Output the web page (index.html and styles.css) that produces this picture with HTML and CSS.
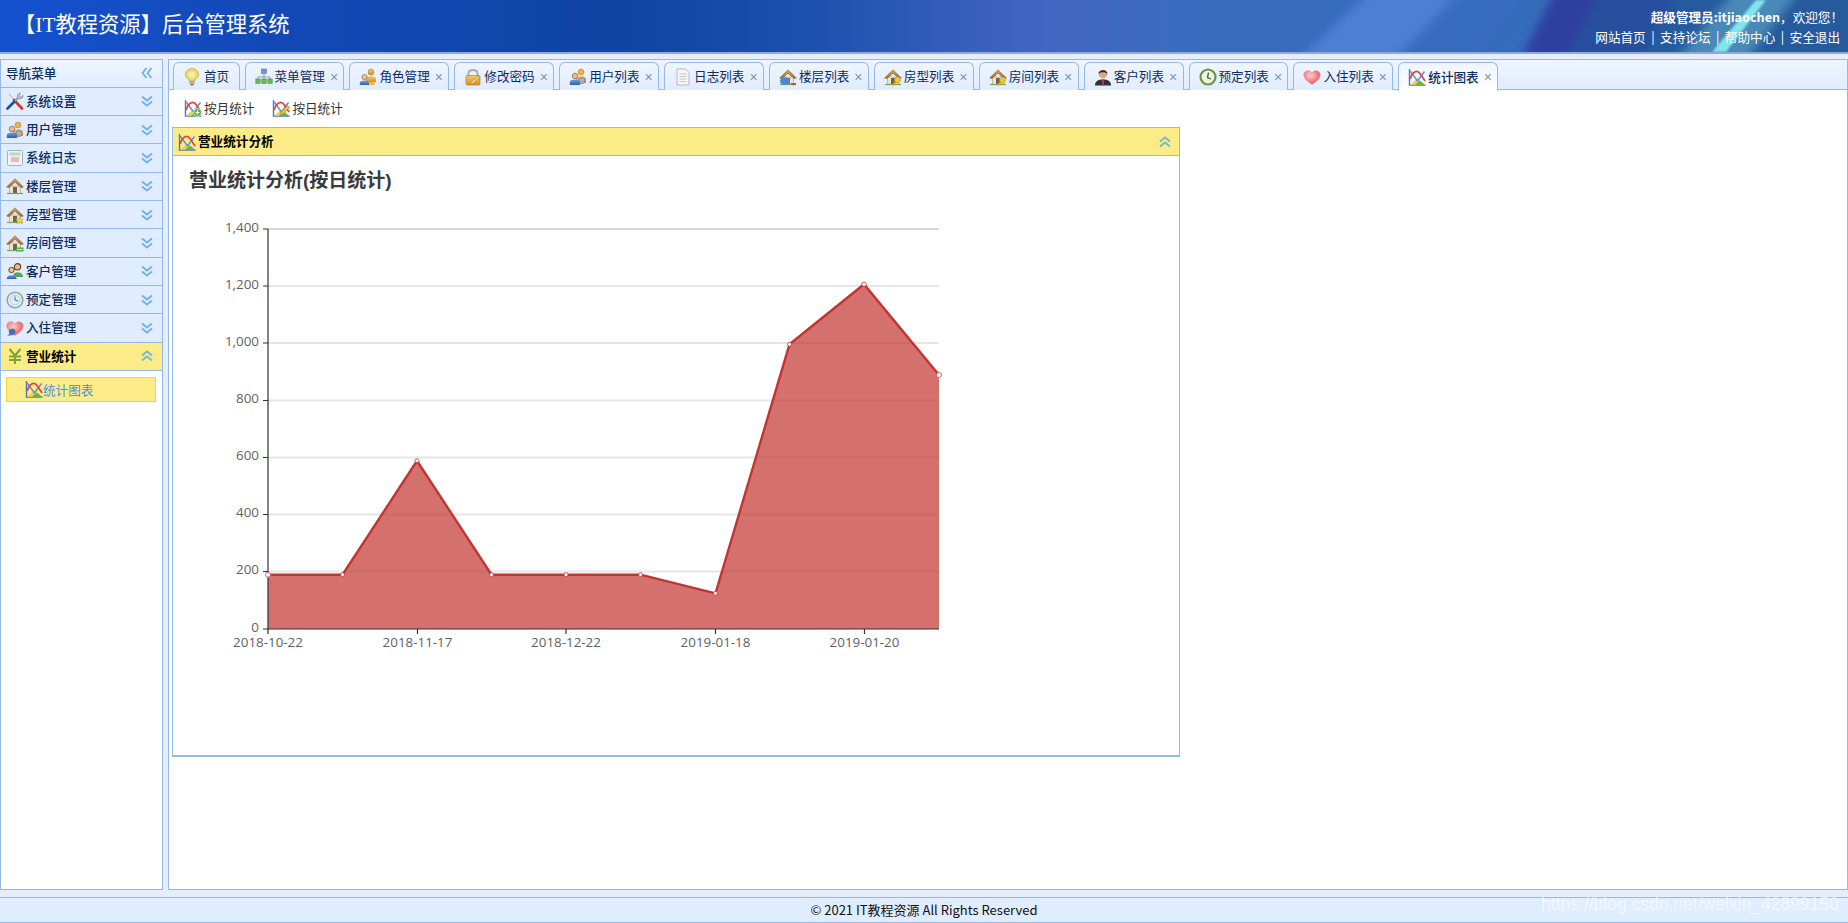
FILE: index.html
```html
<!DOCTYPE html>
<html lang="zh-CN">
<head>
<meta charset="utf-8">
<title>后台管理系统</title>
<link rel="stylesheet" href="styles.css">
</head>
<body>
<svg class="sprite" aria-hidden="true">
  <defs>
    <linearGradient id="gRoof" x1="0" y1="0" x2="0" y2="1"><stop offset="0" stop-color="#d9a860"/><stop offset="1" stop-color="#9a6a2c"/></linearGradient>
    <linearGradient id="gBlue" x1="0" y1="0" x2="0" y2="1"><stop offset="0" stop-color="#6d9de0"/><stop offset="1" stop-color="#2f5fb0"/></linearGradient>
    <linearGradient id="gOrange" x1="0" y1="0" x2="0" y2="1"><stop offset="0" stop-color="#f6c760"/><stop offset="1" stop-color="#d8902a"/></linearGradient>
    <radialGradient id="gBulb"><stop offset="0" stop-color="#fff8c0"/><stop offset="1" stop-color="#e6cf58"/></radialGradient>
    <radialGradient id="gHeart" cx=".4" cy=".35"><stop offset="0" stop-color="#ffd0d0"/><stop offset="1" stop-color="#ee6f78"/></radialGradient>
    <symbol id="i-tools" viewBox="0 0 18 18">
      <path d="M3 2 16 15.500" stroke="#c9c9c9" stroke-width="1.400"/>
      <path d="M8 8 16 16.500" stroke="#d8352a" stroke-width="2.600" stroke-linecap="round"/>
      <path d="M1.500 16.500 9.500 8.500" stroke="#1d4f9c" stroke-width="2.600" stroke-linecap="round"/>
      <path d="M9 9 13 5" stroke="#9ca3ab" stroke-width="2.400"/>
      <path d="M17 3.200 14.800 5.200 13 4 14.600 1.200C12.200.6 10.800 2.800 11.600 5.200L13.200 6.800C15.600 7.200 17.600 5.600 17 3.200Z" fill="#c4c8cd" stroke="#7d848c" stroke-width=".6"/>
    </symbol>
    <symbol id="i-users" viewBox="0 0 18 18">
      <circle cx="12" cy="4" r="3" fill="#eeb04e" stroke="#b27c24" stroke-width=".5"/>
      <path d="M7 15V10C8 7.500 16 7.500 17 10V15Z" fill="url(#gOrange)"/>
      <circle cx="6" cy="8" r="2.800" fill="#e9b98f" stroke="#7a5230" stroke-width=".6"/>
      <path d="M.8 17V14C1.800 10.800 10.200 10.800 11.200 14V17Z" fill="url(#gBlue)"/>
      <circle cx="13" cy="12.500" r="3" fill="#aeb4b8" stroke="#6d7378" stroke-width=".8"/>
    </symbol>
    <symbol id="i-log" viewBox="0 0 18 18">
      <rect x="1.500" y="1.500" width="15" height="15" rx="1" fill="#eef3f7" stroke="#9db3c9"/>
      <rect x="3.500" y="3.500" width="11" height="3" fill="#b8dcb4"/>
      <rect x="5" y="8" width="8" height="5" fill="#f2b6bc"/>
    </symbol>
    <symbol id="i-home" viewBox="0 0 18 18">
      <path d="M3.500 9V16.500H14.500V9Z" fill="#efe4c8" stroke="#a9986c" stroke-width=".6"/>
      <path d="M.6 10 9 1.800 17.400 10 15 10.500 9 5.200 3 10.500Z" fill="url(#gRoof)" stroke="#7e5620" stroke-width=".5"/>
      <rect x="7" y="10" width="4" height="6.500" fill="#6a6458"/>
      <path d="M1 16.500H17" stroke="#7ca55a" stroke-width="1.200"/>
    </symbol>
    <symbol id="i-home-star" viewBox="0 0 18 18">
      <use href="#i-home"/>
      <path d="M13.500 10.500 14.700 13 17.400 13.300 15.400 15.100 16 17.800 13.500 16.400 11 17.800 11.600 15.100 9.600 13.300 12.300 13Z" fill="#f7d33c" stroke="#c29a1c" stroke-width=".4"/>
    </symbol>
    <symbol id="i-home-green" viewBox="0 0 18 18">
      <use href="#i-home"/>
      <path d="M10 13.500H17.500V17.500H10Z" fill="#57a746"/>
      <path d="M11 15.500H16.500" stroke="#d6f0cf" stroke-width="1.200"/>
    </symbol>
    <symbol id="i-home-bubble" viewBox="0 0 18 18">
      <use href="#i-home"/>
      <ellipse cx="6" cy="13" rx="5" ry="3.800" fill="#4d86d0"/>
      <path d="M12 15H17V17H12Z" fill="#c0504d"/>
    </symbol>
    <symbol id="i-home-key" viewBox="0 0 18 18">
      <use href="#i-home"/>
      <circle cx="13.500" cy="12" r="3" fill="#f4c534" stroke="#b88f12" stroke-width=".5"/>
      <path d="M12 14 8.500 17.500" stroke="#d7a51e" stroke-width="1.800"/>
    </symbol>
    <symbol id="i-people" viewBox="0 0 18 18">
      <circle cx="11.500" cy="4.800" r="3.200" fill="#e9b98f" stroke="#6d3f1e" stroke-width="1.100"/>
      <path d="M7 13.500C7.500 9 15.500 9 17 13.500V15H7Z" fill="#58a85c"/>
      <circle cx="5.500" cy="8" r="2.700" fill="#eec39e" stroke="#5a3418" stroke-width=".9"/>
      <path d="M.6 16.500C1 12 10 12 10.600 16.500V17H.6Z" fill="url(#gBlue)"/>
    </symbol>
    <symbol id="i-clock" viewBox="0 0 18 18">
      <circle cx="9" cy="9" r="7.800" fill="#e9eef0" stroke="#8fa99a" stroke-width="1.600"/>
      <circle cx="9" cy="9" r="5" fill="#d9eef8" stroke="#a9c2cf" stroke-width=".7"/>
      <path d="M9 5.500V9L12 10" stroke="#5b7a8c" stroke-width="1.100" fill="none"/>
    </symbol>
    <symbol id="i-clock-green" viewBox="0 0 18 18">
      <circle cx="9" cy="9" r="7.500" fill="#eef2e2" stroke="#6f9340" stroke-width="2.200"/>
      <path d="M9.500 4.500 8.500 9.500 12 11" stroke="#4b5a3a" stroke-width="1.300" fill="none"/>
    </symbol>
    <symbol id="i-heart" viewBox="0 0 18 18">
      <path d="M9 16.500C3 12.500.5 9.500.8 6.200 1.200 2.500 6.500 1.200 9 4.800 11.500 1.200 16.800 2.500 17.200 6.200 17.500 9.500 15 12.500 9 16.500Z" fill="url(#gHeart)" stroke="#e4808a" stroke-width=".5"/>
    </symbol>
    <symbol id="i-heart-bubble" viewBox="0 0 18 18">
      <use href="#i-heart"/>
      <path d="M1 16.800 3.500 15C1.500 12 4.500 8.500 8 10 10.500 11.500 9.800 15 7 16 5 16.500 3 16.300 1 16.800Z" fill="#4470b8"/>
    </symbol>
    <symbol id="i-yen" viewBox="0 0 18 18">
      <path d="M3.500 2 9 8.500 14.500 2M3 9.500H15M3 13H15M9 8.500V17" stroke="#7fa23a" stroke-width="2.100" fill="none"/>
    </symbol>
    <symbol id="i-chart" viewBox="0 0 18 18">
      <path d="M1.500 1V17H17.500" stroke="#4a7db8" stroke-width="1.400" fill="none"/>
      <path d="M2 17 9 10.500 17 16.500Z" fill="#ecd24a"/>
      <path d="M7 17 12 12.500 17 17Z" fill="#6bb04a"/>
      <path d="M2.200 3 9.500 13 16.500 3.500" stroke="#5a92dc" stroke-width="1.500" fill="none"/>
      <path d="M2.200 11C4 4 9 1 12 5.500L17 13" stroke="#e2453a" stroke-width="1.700" fill="none"/>
    </symbol>
    <symbol id="i-chart-plus" viewBox="0 0 18 18">
      <use href="#i-chart"/>
      <circle cx="13.500" cy="13.500" r="4" fill="#62b04a" stroke="#fff" stroke-width=".6"/>
      <path d="M13.500 11.500V15.500M11.500 13.500H15.500" stroke="#fff" stroke-width="1.200"/>
    </symbol>
    <symbol id="i-chart-pen" viewBox="0 0 18 18">
      <use href="#i-chart"/>
      <path d="M8 16.500 9 13 15.500 6.500 17.500 8.500 11 15Z" fill="#ecc04a" stroke="#a77e1d" stroke-width=".6"/>
    </symbol>
    <symbol id="i-bulb" viewBox="0 0 18 18">
      <path d="M9 .6C5 .6 2.400 3.400 2.400 6.500 2.400 9.400 5.600 10.500 6.300 13H11.700C12.400 10.500 15.600 9.400 15.600 6.500 15.600 3.400 13 .6 9 .6Z" fill="url(#gBulb)" stroke="#bda83e" stroke-width=".7"/>
      <rect x="6.300" y="13" width="5.400" height="3" rx=".6" fill="#a8aeb4"/>
      <rect x="7.500" y="16" width="3" height="1.500" fill="#73787d"/>
    </symbol>
    <symbol id="i-tree" viewBox="0 0 18 18">
      <rect x="6.500" y="1" width="5" height="4.500" fill="#6d9ad2" stroke="#3f6ca6" stroke-width=".5"/>
      <path d="M9 5.500V9M3 11V9H15V11M9 9V11" stroke="#8a9aa8" fill="none"/>
      <rect x=".8" y="11" width="4.400" height="4.500" fill="#6cb552" stroke="#3f8a2d" stroke-width=".5"/>
      <rect x="6.800" y="11" width="4.400" height="4.500" fill="#6cb552" stroke="#3f8a2d" stroke-width=".5"/>
      <rect x="12.800" y="11" width="4.400" height="4.500" fill="#6cb552" stroke="#3f8a2d" stroke-width=".5"/>
    </symbol>
    <symbol id="i-roles" viewBox="0 0 18 18">
      <circle cx="12" cy="4" r="3" fill="url(#gOrange)" stroke="#a97519" stroke-width=".5"/>
      <path d="M7 14V10.500C8 7.500 16 7.500 17 10.500V14Z" fill="url(#gOrange)"/>
      <circle cx="5.500" cy="9" r="2.600" fill="#eec39e" stroke="#7a5230" stroke-width=".6"/>
      <path d="M.8 17V15C1.500 11.800 9.500 11.800 10.200 15V17Z" fill="url(#gBlue)"/>
      <path d="M9.500 14H16.500L15 17H11Z" fill="#f0b93a"/>
    </symbol>
    <symbol id="i-lock" viewBox="0 0 18 18">
      <path d="M4.500 8V5.500C4.500 .8 13.500 .8 13.500 5.500V8" fill="none" stroke="#a9adb1" stroke-width="1.900"/>
      <rect x="2" y="7.500" width="14" height="9.500" rx="1" fill="url(#gOrange)" stroke="#aa7a22" stroke-width=".6"/>
      <path d="M6 15 14 8.500 15.500 10 8 16Z" fill="#fbe08c" stroke="#8d6a18" stroke-width=".5"/>
    </symbol>
    <symbol id="i-doc" viewBox="0 0 18 18">
      <path d="M3 1H11.500L15 4.500V17H3Z" fill="#f6f6f6" stroke="#b4b9bc"/>
      <path d="M5.500 6H12.500M5.500 8.500H12.500M5.500 11H12.500M5.500 13.500H12.500" stroke="#c4c8cb"/>
    </symbol>
    <symbol id="i-man" viewBox="0 0 18 18">
      <path d="M1 17.500C1 12.500 5 11.500 9 11.500 13 11.500 17 12.500 17 17.500Z" fill="#2b3140"/>
      <path d="M7.800 11.500H10.200L9.800 17.500H8.200Z" fill="#b03a3a"/>
      <circle cx="9" cy="6" r="4.300" fill="#dca77a"/>
      <path d="M4.600 6C4.200 1 13.800 1 13.400 6 12 3.800 6 3.800 4.600 6Z" fill="#3b2b1e"/>
    </symbol>
    <symbol id="i-down" viewBox="0 0 14 14">
      <path d="M2 2.500 7 6.500 12 2.500M2 7.500 7 11.500 12 7.500" fill="none" stroke="#6fb0ee" stroke-width="1.800"/>
    </symbol>
    <symbol id="i-up" viewBox="0 0 14 14">
      <path d="M2 6.500 7 2.500 12 6.500M2 11.500 7 7.500 12 11.500" fill="none" stroke="#75b9cf" stroke-width="1.800"/>
    </symbol>
    <symbol id="i-left" viewBox="0 0 14 14">
      <path d="M6.500 2 2.500 7 6.500 12M11.500 2 7.500 7 11.500 12" fill="none" stroke="#6fb0ee" stroke-width="1.800"/>
    </symbol>
  </defs>
</svg>

<div class="page">
  <header class="top">
    <svg class="top-art" viewBox="1200 0 648 52" preserveAspectRatio="none" aria-hidden="true">
      <g class="art-soft">
        <polygon points="1520,62 1556,-10 1600,-10 1565,62" fill="#2f3f9f"/>
        <polygon points="1565,62 1600,-10 1680,-10 1640,62" fill="#274f9e"/>
        <polygon points="1640,62 1680,-10 1860,-10 1860,62" fill="#255b9c"/>
        <polygon points="1296,62 1372,-10 1462,-10 1392,62" fill="#5585db" opacity=".75"/>
        <polygon points="1392,62 1462,-10 1530,-10 1470,62" fill="#3a6cc0" opacity=".7"/>
        <polygon points="1675,62 1735,-10 1800,-10 1745,62" fill="#62a8cc" opacity=".6"/>
      </g>
      <polygon class="art-thin" points="1712,52 1756,0 1766,0 1726,52" fill="#7fe6ec"/>
    </svg>
    <h1 class="brand">【IT教程资源】后台管理系统</h1>
    <div class="userbox">
      <div class="hello"><b>超级管理员:itjiaochen</b>，欢迎您！</div>
      <nav class="toplinks"><a>网站首页</a><i>|</i><a>支持论坛</a><i>|</i><a>帮助中心</a><i>|</i><a>安全退出</a></nav>
    </div>
  </header>

  <div class="main">
    <aside class="side">
      <div class="side-title"><span>导航菜单</span><svg class="chev"><use href="#i-left"/></svg></div>
      <div class="acc"><svg class="ic"><use href="#i-tools"/></svg><span>系统设置</span><svg class="chev"><use href="#i-down"/></svg></div>
      <div class="acc"><svg class="ic"><use href="#i-users"/></svg><span>用户管理</span><svg class="chev"><use href="#i-down"/></svg></div>
      <div class="acc"><svg class="ic"><use href="#i-log"/></svg><span>系统日志</span><svg class="chev"><use href="#i-down"/></svg></div>
      <div class="acc"><svg class="ic"><use href="#i-home"/></svg><span>楼层管理</span><svg class="chev"><use href="#i-down"/></svg></div>
      <div class="acc"><svg class="ic"><use href="#i-home-star"/></svg><span>房型管理</span><svg class="chev"><use href="#i-down"/></svg></div>
      <div class="acc"><svg class="ic"><use href="#i-home-green"/></svg><span>房间管理</span><svg class="chev"><use href="#i-down"/></svg></div>
      <div class="acc"><svg class="ic"><use href="#i-people"/></svg><span>客户管理</span><svg class="chev"><use href="#i-down"/></svg></div>
      <div class="acc"><svg class="ic"><use href="#i-clock"/></svg><span>预定管理</span><svg class="chev"><use href="#i-down"/></svg></div>
      <div class="acc"><svg class="ic"><use href="#i-heart-bubble"/></svg><span>入住管理</span><svg class="chev"><use href="#i-down"/></svg></div>
      <div class="acc acc-on"><svg class="ic"><use href="#i-yen"/></svg><span>营业统计</span><svg class="chev"><use href="#i-up"/></svg></div>
      <div class="acc-body"><a class="leaf"><svg class="ic-s"><use href="#i-chart"/></svg><span>统计图表</span></a></div>
    </aside>

    <section class="work">
      <div class="tabs">
        <a class="tab tab-home"><svg class="ic-s"><use href="#i-bulb"/></svg><span>首页</span></a>
        <a class="tab"><svg class="ic-s"><use href="#i-tree"/></svg><span>菜单管理</span><em>×</em></a>
        <a class="tab"><svg class="ic-s"><use href="#i-roles"/></svg><span>角色管理</span><em>×</em></a>
        <a class="tab"><svg class="ic-s"><use href="#i-lock"/></svg><span>修改密码</span><em>×</em></a>
        <a class="tab"><svg class="ic-s"><use href="#i-users"/></svg><span>用户列表</span><em>×</em></a>
        <a class="tab"><svg class="ic-s"><use href="#i-doc"/></svg><span>日志列表</span><em>×</em></a>
        <a class="tab"><svg class="ic-s"><use href="#i-home-bubble"/></svg><span>楼层列表</span><em>×</em></a>
        <a class="tab"><svg class="ic-s"><use href="#i-home-key"/></svg><span>房型列表</span><em>×</em></a>
        <a class="tab"><svg class="ic-s"><use href="#i-home-key"/></svg><span>房间列表</span><em>×</em></a>
        <a class="tab"><svg class="ic-s"><use href="#i-man"/></svg><span>客户列表</span><em>×</em></a>
        <a class="tab"><svg class="ic-s"><use href="#i-clock-green"/></svg><span>预定列表</span><em>×</em></a>
        <a class="tab"><svg class="ic-s"><use href="#i-heart"/></svg><span>入住列表</span><em>×</em></a>
        <a class="tab tab-on"><svg class="ic-s"><use href="#i-chart"/></svg><span>统计图表</span><em>×</em></a>
      </div>
      <div class="tools">
        <a class="tool"><svg class="ic-s"><use href="#i-chart-plus"/></svg><span>按月统计</span></a>
        <a class="tool"><svg class="ic-s"><use href="#i-chart-pen"/></svg><span>按日统计</span></a>
      </div>
      <div class="panel">
        <div class="panel-head"><svg class="ic-s"><use href="#i-chart"/></svg><span>营业统计分析</span><svg class="chev"><use href="#i-up"/></svg></div>
        <div class="panel-body">
          <svg class="chart" viewBox="173 156 1006 599">
            <text class="c-title" x="189" y="187">营业统计分析(按日统计)</text>
            <g class="grid">
              <path class="grid-top" d="M268 229H939"/>
              <path d="M268 286H939M268 343H939M268 400.500H939M268 457.500H939M268 514.500H939M268 571.500H939"/>
            </g>
            <path class="area" d="M268 574.700 342.500 574.700 417 460.800 491.500 574.700 566 574.700 640.500 574.700 715.500 593.300 789.500 344.300 864 284.300 939 375V629H268Z"/>
            <path class="line" d="M268 574.700 342.500 574.700 417 460.800 491.500 574.700 566 574.700 640.500 574.700 715.500 593.300 789.500 344.300 864 284.300 939 375"/>
            <g class="axis">
              <path d="M268 229V629H939"/>
              <path d="M263 229H268M263 286H268M263 343H268M263 400.500H268M263 457.500H268M263 514.500H268M263 571.500H268M263 629H268"/>
              <path d="M268 629V634M417.500 629V634M566 629V634M715.500 629V634M864.500 629V634"/>
            </g>
            <g class="dots">
              <circle class="dot-big" cx="268" cy="574.700" r="2.500"/>
              <circle cx="342.500" cy="574.700" r="2"/>
              <circle cx="417" cy="460.800" r="2"/>
              <circle cx="491.500" cy="574.700" r="2"/>
              <circle cx="566" cy="574.700" r="2"/>
              <circle cx="640.500" cy="574.700" r="2"/>
              <circle cx="715.500" cy="593.300" r="2"/>
              <circle cx="789.500" cy="344.300" r="2"/>
              <circle cx="864" cy="284.300" r="2.300"/>
              <circle class="dot-big" cx="939" cy="375" r="2.500"/>
            </g>
            <g class="ylab">
              <text x="259" y="232">1,400</text>
              <text x="259" y="289">1,200</text>
              <text x="259" y="346">1,000</text>
              <text x="259" y="403">800</text>
              <text x="259" y="460">600</text>
              <text x="259" y="517">400</text>
              <text x="259" y="574">200</text>
              <text x="259" y="632">0</text>
            </g>
            <g class="xlab">
              <text x="268" y="647">2018-10-22</text>
              <text x="417.500" y="647">2018-11-17</text>
              <text x="566" y="647">2018-12-22</text>
              <text x="715.500" y="647">2019-01-18</text>
              <text x="864.500" y="647">2019-01-20</text>
            </g>
          </svg>
        </div>
      </div>
    </section>
  </div>

  <footer class="foot">© 2021 IT教程资源 All Rights Reserved</footer>
  <div class="mark">https://blog.csdn.net/weixin_42899150</div>
</div>
</body>
</html>
```

FILE: styles.css
```css
* { box-sizing: border-box; }
html, body { margin: 0; padding: 0; }
body {
  font-family: "Noto Sans CJK SC", "Noto Sans", sans-serif;
  font-size: 12.6px;
  color: #0e2d5f;
  background: #fff;
}
.sprite { position: absolute; width: 0; height: 0; overflow: hidden; }
.page {
  position: relative;
  width: 1848px;
  height: 923px;
  display: flex;
  flex-direction: column;
  background: #e6eefa;
  overflow: hidden;
}

/* header */
.top {
  position: relative;
  flex: none;
  height: 54px;
  display: flex;
  justify-content: space-between;
  align-items: flex-start;
  border-bottom: 2px solid #8fa9e0;
  background: linear-gradient(90deg, #1552d0 0, #1349b8 250px, #0f44a4 620px, #1c4fae 800px, #4267c2 1050px, #3a6cbe 1200px, #2f6bb8 1848px);
}
.top-art { position: absolute; left: 1200px; top: 0; width: 648px; height: 52px; overflow: hidden; }
.art-soft { filter: blur(5px); }
.art-thin { filter: blur(1px); }
.brand {
  position: relative;
  margin: 9px 0 0 14px;
  font-family: "Liberation Serif", "Noto Sans CJK SC", serif;
  font-size: 21.300px;
  line-height: 32px;
  font-weight: 400;
  color: #fff;
}
.userbox {
  position: relative;
  padding: 7px 8px 0 0;
  text-align: right;
  color: #fff;
  line-height: 20px;
}
.hello { margin-right: -3px; }
.toplinks { display: flex; justify-content: flex-end; }
.toplinks i { font-style: normal; width: 14.400px; text-align: center; }

/* main area */
.main {
  flex: 1;
  min-height: 0;
  display: flex;
  gap: 5px;
  padding: 5px 0 7px;
}
.side {
  flex: none;
  width: 163px;
  display: flex;
  flex-direction: column;
  background: #fff;
  border: 1px solid #95b8e7;
}
.side-title, .acc {
  flex: none;
  height: 28.350px;
  display: flex;
  align-items: center;
  background: #e0ecff;
  border-bottom: 1px solid #95b8e7;
  font-weight: 500;
  color: #0e2d5f;
}
.side-title span, .acc span { padding-bottom: 2px; }
.side-title {
  height: 27.500px;
  padding: 0 8px 0 5px;
  background: linear-gradient(180deg, #eff5ff, #e0ecff);
}
.acc { padding: 0 8px 0 5px; }
.acc .ic { margin-right: 2px; }
.acc-on { background: #fbec88; color: #000; font-weight: 700; }
.chev { width: 14px; height: 14px; margin-left: auto; flex: none; }
.ic { width: 18px; height: 18px; flex: none; }
.ic-s { width: 18px; height: 18px; flex: none; }
.acc-body { padding: 6px 6px 0 5px; }
.leaf {
  display: flex;
  align-items: center;
  gap: 0;
  height: 25px;
  padding-left: 18px;
  color: #4a90e8;
  background: #fbec88;
  border: 1px solid #fad42e;
}

/* workspace */
.work {
  flex: 1;
  min-width: 0;
  background: #fff;
  border: 1px solid #95b8e7;
}
.tabs {
  height: 30px;
  display: flex;
  gap: 5px;
  padding: 2px 0 0 4px;
  background: linear-gradient(180deg, #eff5ff, #e0ecff);
  border-bottom: 1px solid #95b8e7;
}
.tab {
  flex: none;
  width: 99.900px;
  height: 28px;
  display: flex;
  align-items: center;
  padding-left: 9px;
  gap: 2px;
  background: linear-gradient(180deg, #eff5ff, #e0ecff);
  border: 1px solid #95b8e7;
  border-bottom: 0;
  border-radius: 6px 6px 0 0;
}
.tab span { padding-bottom: 2px; }
.tab em {
  margin-left: 3px;
  font-family: "Liberation Sans", sans-serif;
  font-style: normal;
  font-size: 14px;
  line-height: 14px;
  color: #7b93bd;
}
.tab-home { width: 66.500px; padding-left: 9px; gap: 3px; }
.tab-on {
  height: 29px;
  font-weight: 500;
  color: #0e2d5f;
  background: linear-gradient(180deg, #eff5ff, #fff);
}
.tools {
  height: 37px;
  display: flex;
  align-items: center;
  gap: 18px;
  padding-left: 15px;
  padding-bottom: 1px;
  color: #333;
}
.tool { display: flex; align-items: center; gap: 2px; }
.tool span { padding-bottom: 2px; }
.panel {
  width: 1008px;
  height: 630px;
  margin-left: 3px;
  display: flex;
  flex-direction: column;
  border: 1px solid #95b8e7;
  border-bottom-width: 2px;
}
.panel-head {
  flex: none;
  height: 28px;
  display: flex;
  align-items: center;
  gap: 2px;
  padding: 0 7px 0 5px;
  background: #fbec88;
  border-bottom: 1px solid #95b8e7;
  color: #000;
  font-weight: 700;
}
.panel-head span { padding-bottom: 2px; }
.panel-body { flex: 1; min-height: 0; background: #fff; }
.chart { display: block; width: 1006px; height: 599px; }
.c-title {
  font-family: "Liberation Sans", "Noto Sans CJK SC", sans-serif;
  font-size: 19px;
  font-weight: 700;
  fill: #3a3a3a;
}
.grid path { fill: none; stroke: #e6e6e6; stroke-width: 2; }
.grid .grid-top { stroke: #ccc; stroke-width: 1.500; }
.area { fill: #c23531; fill-opacity: .7; stroke: none; }
.line { fill: none; stroke: #c23531; stroke-width: 2.400; }
.axis path { fill: none; stroke: #333; stroke-width: 1.200; }
.dots circle { fill: #fff; stroke: #c23531; stroke-width: .8; }
.dots .dot-big { fill: #fff; stroke: #d9656a; stroke-width: 1; }
.ylab text, .xlab text {
  font-family: "Open Sans", sans-serif;
  font-size: 13.400px;
  fill: #5f5f5f;
}
.ylab text { text-anchor: end; }
.xlab text { text-anchor: middle; }

/* footer */
.foot {
  flex: none;
  height: 26px;
  display: flex;
  align-items: center;
  justify-content: center;
  padding-bottom: 1px;
  background: #e0ecff;
  border-top: 1px solid #95b8e7;
  border-bottom: 1px solid #95b8e7;
  font-size: 13px;
  color: #111;
}
.mark {
  position: absolute;
  right: 9px;
  bottom: 10px;
  font-family: "Liberation Sans", sans-serif;
  font-size: 17.500px;
  line-height: 18px;
  color: #fff;
  opacity: .6;
}
```
